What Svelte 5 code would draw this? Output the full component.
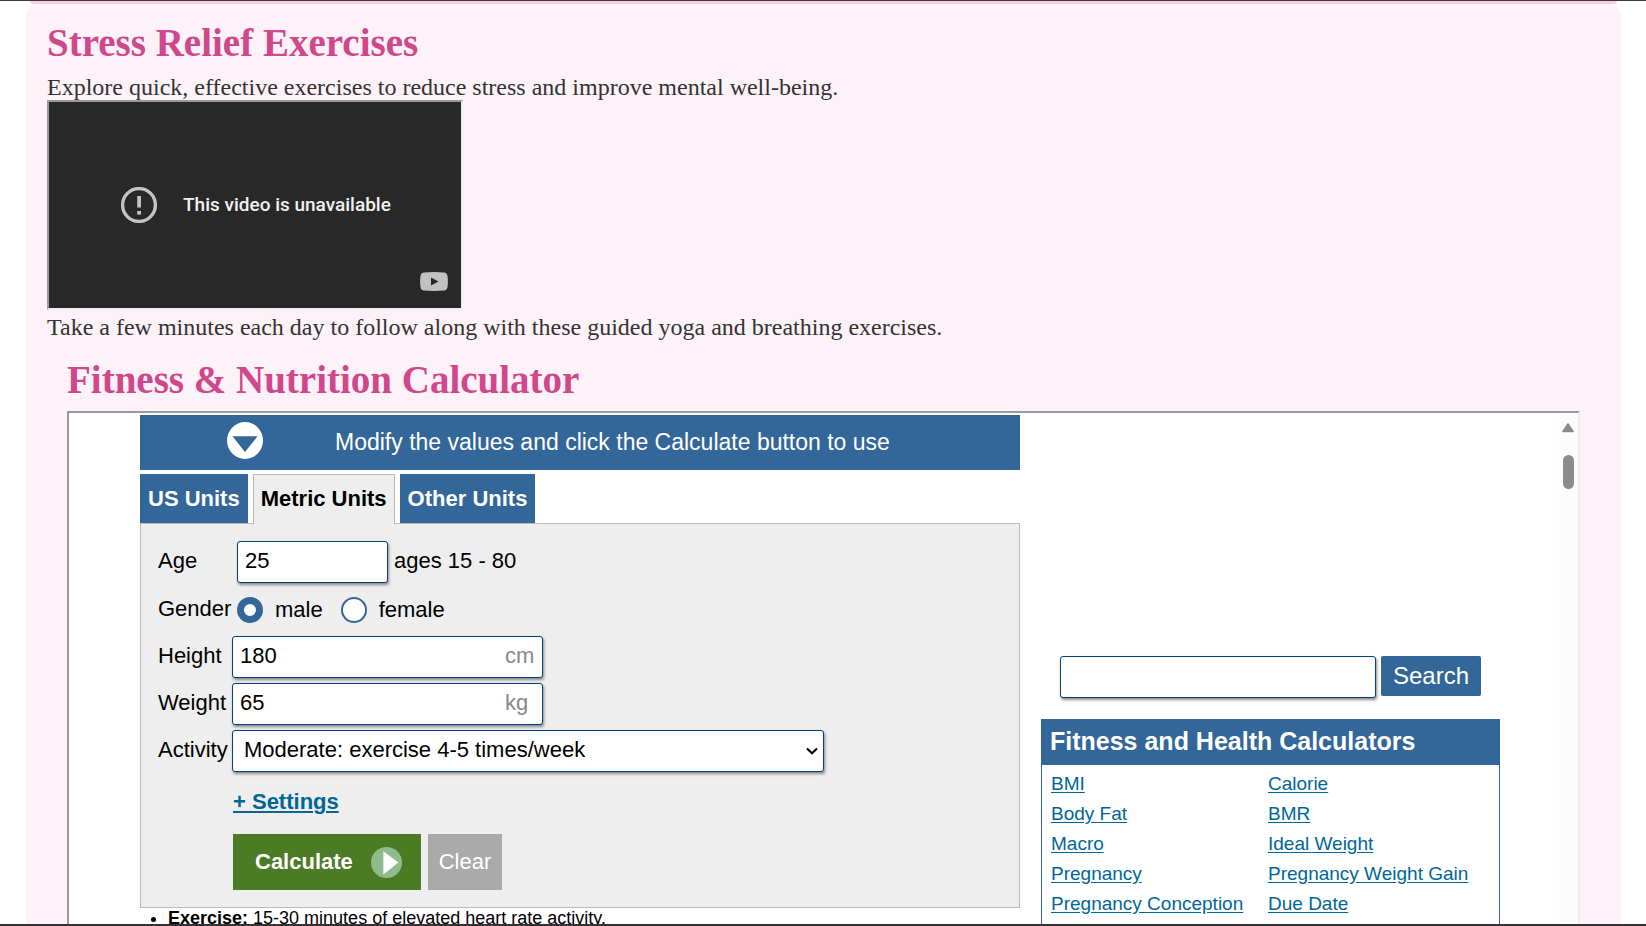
<script>
  let age = $state('25');
  let gender = $state('male');
  let height = $state('180');
  let weight = $state('65');
  let activity = $state('moderate');
  let query = $state('');

  const links = [
    'BMI', 'Calorie',
    'Body Fat', 'BMR',
    'Macro', 'Ideal Weight',
    'Pregnancy', 'Pregnancy Weight Gain',
    'Pregnancy Conception', 'Due Date'
  ];

  function clearForm() {
    age = '';
    height = '';
    weight = '';
  }
</script>

<div class="page">
  <div class="previous"></div>
  <main class="card">
    <section>
      <h2>Stress Relief Exercises</h2>
      <p>Explore quick, effective exercises to reduce stress and improve mental well-being.</p>
      <div class="video">
        <svg class="alert" viewBox="0 0 36 36" aria-hidden="true">
          <circle cx="18" cy="18" r="16.4" fill="none" stroke="#c3c3c3" stroke-width="3.4" />
          <rect x="16.2" y="9" width="3.8" height="11.5" fill="#c3c3c3" />
          <rect x="16.2" y="24" width="3.8" height="3.6" fill="#c3c3c3" />
        </svg>
        <span>This video is unavailable</span>
        <svg class="tube" viewBox="0 0 28 19" aria-hidden="true">
          <path d="M4 .6Q14-.5 24 .6Q27 .8 27.5 4Q28.3 9.500 27.500 15Q27 18.200 24 18.500Q14 19.400 4 18.500Q1 18.200.5 15Q-.3 9.500.5 4Q1 .8 4 .6Z" fill="#c1c1c1" />
          <path d="M11 5.500L18.500 9.500L11 13.500Z" fill="#282828" />
        </svg>
      </div>
      <p>Take a few minutes each day to follow along with these guided yoga and breathing exercises.</p>
    </section>

    <section class="fitness">
      <h2>Fitness &amp; Nutrition Calculator</h2>
      <div class="frame">
        <div class="content">
          <div class="calculator">
            <div class="notice">
              <svg viewBox="0 0 36 37" aria-hidden="true">
                <ellipse cx="18" cy="18.500" rx="18" ry="18.500" fill="#fff" />
                <path d="M5.500 14.300H30.500L18 30Z" fill="#336699" />
              </svg>
              <span>Modify the values and click the Calculate button to use</span>
            </div>
            <nav class="tabs">
              <a href="#us">US Units</a>
              <a href="#metric" class="current">Metric Units</a>
              <a href="#other">Other Units</a>
            </nav>
            <form class="panel" onsubmit={(e) => e.preventDefault()}>
              <div class="row">
                <label class="name" for="age">Age</label>
                <input id="age" class="box short" type="text" bind:value={age} />
                <span class="hint">ages 15 - 80</span>
              </div>
              <div class="row genders" role="radiogroup" aria-labelledby="gender">
                <span class="name" id="gender">Gender</span>
                <label><input type="radio" name="gender" value="male" bind:group={gender} />male</label>
                <label><input type="radio" name="gender" value="female" bind:group={gender} />female</label>
              </div>
              <div class="row">
                <label class="name" for="height">Height</label>
                <div class="unit-field">
                  <input id="height" class="box" type="text" bind:value={height} />
                  <span class="unit">cm</span>
                </div>
              </div>
              <div class="row">
                <label class="name" for="weight">Weight</label>
                <div class="unit-field">
                  <input id="weight" class="box" type="text" bind:value={weight} />
                  <span class="unit">kg</span>
                </div>
              </div>
              <div class="row">
                <label class="name" for="activity">Activity</label>
                <div class="select">
                  <select id="activity" class="box" bind:value={activity}>
                    <option value="moderate">Moderate: exercise 4-5 times/week</option>
                  </select>
                  <svg viewBox="0 0 12 8" aria-hidden="true">
                    <path d="M1 1.500L6 6.300L11 1.500" fill="none" stroke="#000" stroke-width="2" />
                  </svg>
                </div>
              </div>
              <div class="settings"><a href="#settings">+ Settings</a></div>
              <div class="actions">
                <button type="submit" class="calculate">
                  Calculate
                  <svg viewBox="0 0 30 30" aria-hidden="true">
                    <circle cx="15" cy="15" r="15" fill="#8fbc8f" />
                    <path d="M12 4L26.500 15L12 26.500Z" fill="#fff" />
                  </svg>
                </button>
                <button type="button" class="clear" onclick={clearForm}>Clear</button>
              </div>
            </form>
            <ul>
              <li><b>Exercise:</b> 15-30 minutes of elevated heart rate activity.</li>
            </ul>
          </div>

          <aside>
            <form class="search" onsubmit={(e) => e.preventDefault()}>
              <input class="box" type="text" aria-label="Search" bind:value={query} />
              <button type="submit">Search</button>
            </form>
            <div class="directory">
              <h3>Fitness and Health Calculators</h3>
              <div class="links">
                {#each links as link}
                  <a href="#calculators">{link}</a>
                {/each}
              </div>
            </div>
          </aside>
        </div>
        <div class="scrollbar" aria-hidden="true">
          <svg viewBox="0 0 12 10"><path d="M6 1L11 8.500H1Z" fill="#8b8b8b" stroke="#8b8b8b" stroke-width="1.600" stroke-linejoin="round" /></svg>
          <div class="thumb"></div>
        </div>
      </div>
    </section>
  </main>
</div>

<style>
  :global(body) {
    margin: 0;
    background: #fff;
  }

  .page,
  .page * {
    box-sizing: border-box;
  }

  .page {
    display: flex;
    flex-direction: column;
    height: 100vh;
    overflow: hidden;
    border-top: 1px solid #3b383b;
    border-bottom: 2px solid #343234;
    font-family: "Liberation Serif", serif;
    color: #333;
  }

  .previous {
    flex: none;
    height: 3px;
    margin: 0 29px 0 30px;
    background: #f9cfdd;
    border-radius: 0 0 10px 10px;
  }

  .card {
    flex: 1;
    min-height: 0;
    display: flex;
    flex-direction: column;
    margin: 0 25px 0 26px;
    padding: 19px 21px 0;
    background: #fdf2f8;
    border-radius: 12px 12px 0 0;
  }

  h2 {
    margin: 0 0 11px;
    font-size: 39px;
    line-height: 40px;
    color: #d1478c;
  }

  p {
    margin: 0;
    font-size: 24px;
    line-height: 26px;
  }

  .video {
    position: relative;
    display: flex;
    align-items: center;
    gap: 26px;
    width: 416px;
    height: 210px;
    margin-bottom: 4px;
    padding: 0 72px;
    border: 2px solid;
    border-color: #999 #eee #eee #999;
    background: #282828;
    color: #f1f1f1;
    font: 500 19px/24px Roboto, sans-serif;
    white-space: nowrap;
  }

  .alert {
    flex: none;
    width: 36px;
    height: 36px;
  }

  .tube {
    position: absolute;
    right: 13px;
    bottom: 17px;
    width: 28px;
    height: 19px;
  }

  .fitness {
    flex: 1;
    min-height: 0;
    display: flex;
    flex-direction: column;
    padding: 20px 20px 0;
  }

  .frame {
    flex: 1;
    min-height: 0;
    display: flex;
    overflow: hidden;
    border: 2px solid;
    border-color: #999 #eee #eee #999;
    border-bottom: 0;
    background: #fff;
    font-family: "Liberation Sans", Arial, sans-serif;
    font-size: 22px;
    color: #000;
  }

  .content {
    flex: 1;
    display: grid;
    grid-template-columns: minmax(0, 880fr) minmax(0, 459fr);
    column-gap: 21px;
    padding: 2px 59px 0 71px;
  }

  .notice {
    display: flex;
    align-items: center;
    height: 55px;
    padding: 0 87px;
    gap: 72px;
    background: #336699;
    color: #fff;
    font-size: 23px;
    white-space: nowrap;
  }

  .notice svg {
    flex: none;
    width: 36px;
    height: 37px;
    margin-bottom: 4px;
  }

  .tabs {
    display: flex;
    gap: 5px;
    margin-top: 4px;
  }

  .tabs a {
    height: 49px;
    padding: 0 8px;
    background: #336699;
    color: #fff;
    font-weight: bold;
    line-height: 49px;
    text-decoration: none;
    white-space: nowrap;
  }

  .tabs .current {
    position: relative;
    height: 50px;
    margin-bottom: -1px;
    padding: 0 7px;
    border: 1px solid #bbb;
    border-bottom: 0;
    background: #eee;
    color: #000;
    line-height: 48px;
  }

  .panel {
    display: flex;
    flex-direction: column;
    gap: 5px;
    padding: 17px;
    border: 1px solid #bbb;
    background: #eee;
  }

  .row {
    display: flex;
    align-items: center;
  }

  .name {
    flex: none;
    width: 74px;
    padding-bottom: 2px;
  }

  .box {
    height: 42px;
    margin: 0;
    padding: 0 7px 3px;
    border: 1px solid #004080;
    border-radius: 3px;
    outline: 0;
    background: #fff;
    box-shadow: 1px 2px 3px #888;
    color: #000;
    font: inherit;
  }

  .short {
    width: 151px;
    margin-left: 5px;
  }

  .hint {
    margin-left: 6px;
    padding-bottom: 2px;
  }

  .genders {
    height: 43px;
    gap: 18px;
  }

  .genders .name {
    width: 61px;
  }

  .genders label {
    display: flex;
    align-items: center;
    gap: 12px;
  }

  input[type='radio'] {
    appearance: none;
    width: 26px;
    height: 26px;
    margin: 0;
    border: 2px solid #336699;
    border-radius: 50%;
    background: #fff;
  }

  input[type='radio']:checked {
    border-width: 7px;
  }

  .unit-field {
    position: relative;
    width: 311px;
  }

  .unit-field .box {
    display: block;
    width: 100%;
  }

  .unit {
    position: absolute;
    top: 7px;
    left: 273px;
    color: #888;
  }

  .select {
    position: relative;
    width: 592px;
  }

  .select .box {
    display: block;
    width: 100%;
    padding: 0 11px 3px;
    appearance: none;
  }

  .select svg {
    position: absolute;
    right: 6px;
    top: 17px;
    width: 12px;
    height: 8px;
    pointer-events: none;
  }

  .settings {
    margin: 12px 0 14px 75px;
    font-weight: bold;
    line-height: 26px;
  }

  a {
    color: #006699;
    text-underline-offset: 2px;
  }

  .actions {
    display: flex;
    gap: 7px;
    margin-left: 75px;
  }

  button {
    border: 0;
    color: #fff;
    font: inherit;
    cursor: pointer;
  }

  .calculate {
    display: flex;
    align-items: center;
    justify-content: space-between;
    width: 188px;
    height: 56px;
    padding: 0 19px 0 22px;
    background: #4c7b25;
    font-weight: bold;
  }

  .calculate svg {
    width: 31px;
    height: 31px;
  }

  .clear {
    width: 74px;
    padding: 0;
    background: #aaa;
  }

  ul {
    margin: 0;
    padding-left: 28px;
    font-size: 18px;
    line-height: 20px;
  }

  aside {
    padding-top: 241px;
  }

  .search {
    display: flex;
    gap: 5px;
    padding: 0 19px;
  }

  .search .box {
    flex: 1;
    min-width: 0;
  }

  .search button {
    width: 100px;
    height: 40px;
    padding: 0;
    border-radius: 2px;
    background: #336699;
    font-size: 24px;
  }

  .directory {
    margin-top: 21px;
    border: 1px solid #336699;
  }

  h3 {
    margin: 0;
    padding: 0 8px 2px;
    background: #336699;
    color: #fff;
    font-size: 25px;
    line-height: 43px;
    white-space: nowrap;
  }

  .links {
    display: grid;
    grid-template-columns: 217fr 231fr;
    padding: 4px 0 40px 9px;
    font-size: 19px;
    line-height: 30px;
    white-space: nowrap;
  }

  .links a {
    justify-self: start;
  }

  .scrollbar {
    flex: none;
    display: flex;
    flex-direction: column;
    align-items: center;
    gap: 22px;
    width: 19px;
    padding: 10px 1px 0 0;
    background: #fcfcfc;
  }

  .scrollbar svg {
    width: 12px;
    height: 10px;
  }

  .thumb {
    width: 11px;
    height: 34px;
    border-radius: 6px;
    background: #8b8b8b;
  }
</style>
